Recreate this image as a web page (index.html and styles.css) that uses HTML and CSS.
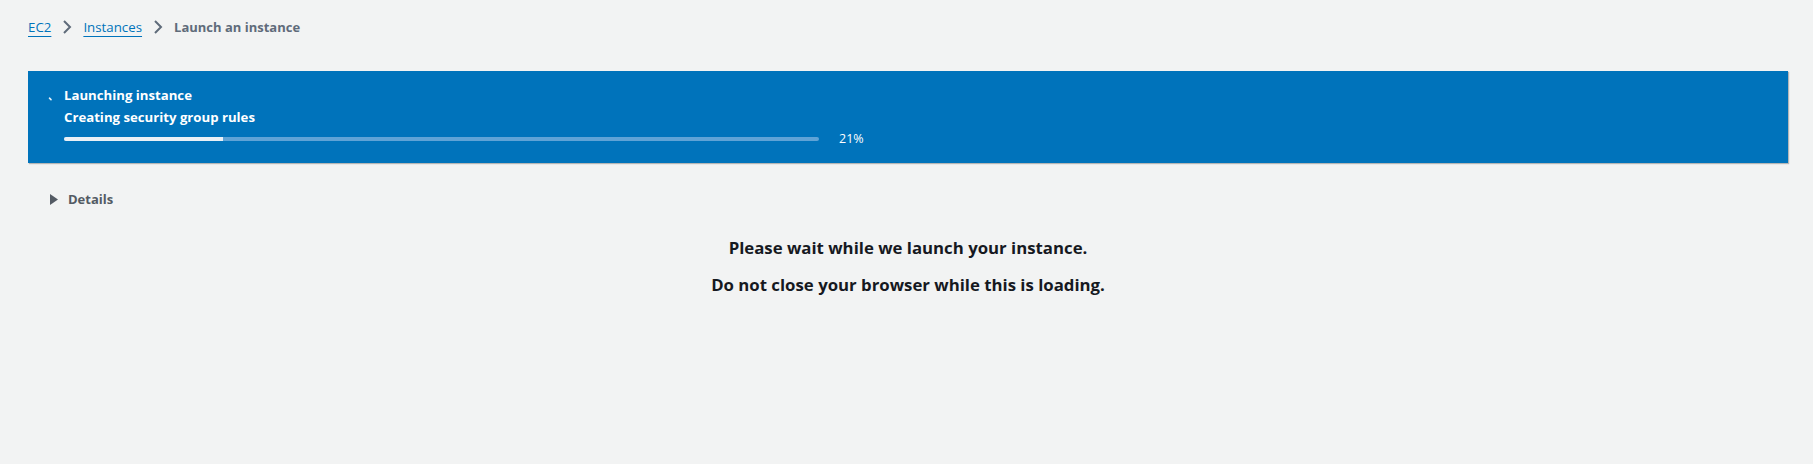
FILE: index.html
```html
<!DOCTYPE html>
<html>
<head>
<meta charset="utf-8">
<link rel="stylesheet" href="styles.css">
</head>
<body>
<div class="page">
  <nav class="crumbs">
    <a class="crumb-link">EC2</a>
    <svg class="chev" width="12" height="16" viewBox="0 0 12 16"><path d="M3 2 L9 8 L3 14" fill="none" stroke="#5f6b7a" stroke-width="2"/></svg>
    <a class="crumb-link">Instances</a>
    <svg class="chev" width="12" height="16" viewBox="0 0 12 16"><path d="M3 2 L9 8 L3 14" fill="none" stroke="#5f6b7a" stroke-width="2"/></svg>
    <span class="crumb-current">Launch an instance</span>
  </nav>

  <div class="flash">
    <div class="spinner"><svg width="8" height="8" viewBox="0 0 8 8"><path d="M1.5 1.2 L3 2.6" stroke="#e6f1fa" stroke-width="1.6" stroke-linecap="round"/></svg></div>
    <div class="flash-body">
      <div class="flash-title">Launching instance</div>
      <div class="flash-sub">Creating security group rules</div>
      <div class="progress-row">
        <div class="track"><div class="fill" style="width:21%"></div></div>
        <span class="pct">21%</span>
      </div>
    </div>
  </div>

  <div class="details">
    <svg class="caret" width="9" height="11" viewBox="0 0 9 11"><path d="M0 0 L8 5.5 L0 11 Z" fill="#545b64"/></svg>
    <span>Details</span>
  </div>

  <div class="wait">
    <p>Please wait while we launch your instance.</p>
    <p>Do not close your browser while this is loading.</p>
  </div>
</div>
</body>
</html>
```

FILE: styles.css
```css
html, body {
  margin: 0;
  padding: 0;
  background: #f2f3f3;
}
body {
  font-family: "Open Sans", "Noto Sans", Arial, sans-serif;
  color: #16191f;
}
.page {
  padding: 0 25px 0 28px;
}
.crumbs {
  display: flex;
  align-items: center;
  height: 28px;
  padding-top: 13px;
  font-size: 13.3px;
}
.crumb-link {
  color: #0073bb;
  text-decoration: underline;
  text-underline-offset: 4px;
  text-decoration-thickness: 1px;
}
.chev {
  margin: 0 10px 0 10px;
}
.crumb-current {
  color: #5f6b7a;
  font-weight: 700;
  font-size: 13px;
}
.flash {
  margin-top: 30px;
  background: #0073bb;
  height: 92px;
  display: flex;
  box-shadow: 1px 1px 1px rgba(0,0,0,0.25);
  color: #ffffff;
}
.spinner {
  width: 36px;
  padding: 17px 0 0 20px;
  box-sizing: border-box;
}
.flash-body {
  padding-top: 15px;
}
.flash-title {
  font-weight: 700;
  font-size: 13.2px;
  line-height: 18px;
}
.flash-sub {
  font-weight: 700;
  font-size: 13.2px;
  line-height: 18px;
  margin-top: 4px;
}
.progress-row {
  display: flex;
  align-items: center;
  margin-top: 4px;
}
.track {
  width: 755px;
  height: 4px;
  background: #5fa3d6;
  border-radius: 2px;
  overflow: hidden;
}
.fill {
  height: 100%;
  background: #e9f0f6;
}
.pct {
  margin-left: 20px;
  font-size: 12.5px;
  color: #ffffff;
}
.details {
  display: flex;
  align-items: center;
  margin-top: 26px;
  padding-left: 22px;
  font-size: 13px;
  font-weight: 700;
  color: #545b64;
  height: 20px;
}
.caret {
  margin-right: 9px;
}
.wait {
  text-align: center;
  margin-top: 28px;
}
.wait p {
  margin: 0;
  font-size: 16.8px;
  font-weight: 700;
  line-height: 21px;
  color: #16191f;
}
.wait p + p {
  margin-top: 16px;
}
```
